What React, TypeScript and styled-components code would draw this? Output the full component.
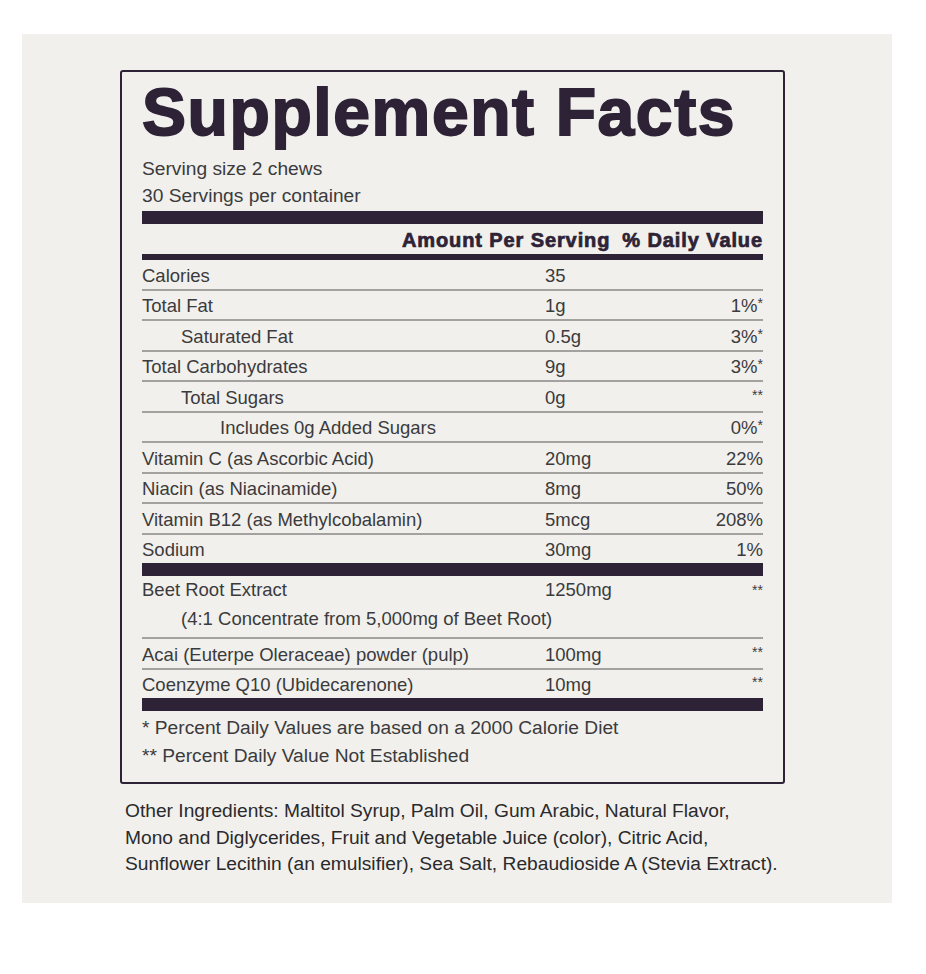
import React from "react";
import styled, { createGlobalStyle } from "styled-components";

const GlobalStyle = createGlobalStyle`
  html, body { margin: 0; padding: 0; background: #ffffff; }
  body { font-family: "Liberation Sans", Arial, sans-serif; }
`;

const DARK = "#2e2236";
const TEXT = "#3b3b3d";
const RULE = "#a3a2a0";

const Panel = styled.div`
  margin: 34px 0 0 22px;
  width: 870px;
  height: 869px;
  box-sizing: border-box;
  background: #f1f0ec;
  padding: 36px 0 0 98px;
`;

const Label = styled.section`
  width: 665px;
  box-sizing: border-box;
  border: 2px solid ${DARK};
  border-radius: 3px;
  padding: 7px 20px 12px 20px;
  color: ${TEXT};
`;

const Title = styled.h1`
  margin: 0;
  font-family: "Liberation Sans", Arial, sans-serif;
  font-weight: 700;
  font-size: 66px;
  line-height: 66px;
  letter-spacing: 1.6px;
  color: ${DARK};
  -webkit-text-stroke: 1.8px ${DARK};
`;

const Serving = styled.div`
  margin-top: 10px;
  font-size: 19.2px;
  line-height: 27px;
  padding-bottom: 2px;
`;

const Bar = styled.div<{ $h: number }>`
  height: ${(p) => p.$h}px;
  background: ${DARK};
`;

const HeaderRow = styled.div`
  display: flex;
  justify-content: flex-end;
  gap: 12px;
  height: 30px;
  padding-top: 3px;
  box-sizing: border-box;
  align-items: center;
  font-weight: 700;
  font-size: 20px;
  letter-spacing: 0.9px;
  color: ${DARK};
  -webkit-text-stroke: 0.7px ${DARK};
`;

const Row = styled.div<{ $last?: boolean }>`
  display: grid;
  grid-template-columns: 403px 1fr auto;
  align-items: center;
  box-sizing: border-box;
  height: ${(p) => (p.$last ? "28.5px" : "30.5px")};
  padding-top: 3px;
  font-size: 18.5px;
  border-bottom: ${(p) => (p.$last ? "none" : `2px solid ${RULE}`)};
`;

const Name = styled.span<{ $indent?: number }>`
  padding-left: ${(p) => (p.$indent || 0) * 39}px;
  white-space: nowrap;
`;

const Amount = styled.span``;

const DV = styled.span`
  text-align: right;
`;

const Star = styled.span`
  font-size: 14px;
  vertical-align: 4px;
`;

const BlockRow = styled.div`
  display: grid;
  grid-template-columns: 403px 1fr auto;
  font-size: 18.5px;
  line-height: 26px;
  padding-top: 1px;
  padding-bottom: 5px;
  border-bottom: 2px solid ${RULE};
`;

const SubLine = styled.span`
  grid-column: 1 / 4;
  padding-left: 39px;
`;

const Footnotes = styled.div`
  padding-top: 3px;
  font-size: 19.2px;
  line-height: 28px;
`;

const Ingredients = styled.p`
  margin: 14px 0 0 5px;
  font-size: 19.2px;
  line-height: 26.5px;
  color: #2a2a2c;
`;

type Fact = { name: string; amt: string; dv: string; star?: string; indent?: number };

const facts: Fact[] = [
  { name: "Calories", amt: "35", dv: "" },
  { name: "Total Fat", amt: "1g", dv: "1%", star: "*" },
  { name: "Saturated Fat", amt: "0.5g", dv: "3%", star: "*", indent: 1 },
  { name: "Total Carbohydrates", amt: "9g", dv: "3%", star: "*" },
  { name: "Total Sugars", amt: "0g", dv: "", star: "**", indent: 1 },
  { name: "Includes 0g Added Sugars", amt: "", dv: "0%", star: "*", indent: 2 },
  { name: "Vitamin C (as Ascorbic Acid)", amt: "20mg", dv: "22%" },
  { name: "Niacin (as Niacinamide)", amt: "8mg", dv: "50%" },
  { name: "Vitamin B12 (as Methylcobalamin)", amt: "5mcg", dv: "208%" },
  { name: "Sodium", amt: "30mg", dv: "1%" },
];

const others: Fact[] = [
  { name: "Acai (Euterpe Oleraceae) powder (pulp)", amt: "100mg", dv: "", star: "**" },
  { name: "Coenzyme Q10 (Ubidecarenone)", amt: "10mg", dv: "", star: "**" },
];

const FactRow = ({ f, last }: { f: Fact; last?: boolean }) => (
  <Row $last={last}>
    <Name $indent={f.indent}>{f.name}</Name>
    <Amount>{f.amt}</Amount>
    <DV>
      {f.dv}
      {f.star && <Star>{f.star}</Star>}
    </DV>
  </Row>
);

export default function App() {
  return (
    <>
      <GlobalStyle />
      <Panel>
        <Label>
          <Title>Supplement Facts</Title>
          <Serving>
            Serving size 2 chews
            <br />
            30 Servings per container
          </Serving>
          <Bar $h={13} />
          <HeaderRow>
            <span>Amount Per Serving</span>
            <span>% Daily Value</span>
          </HeaderRow>
          <Bar $h={6} />
          {facts.map((f, i) => (
            <FactRow key={f.name} f={f} last={i === facts.length - 1} />
          ))}
          <Bar $h={13} />
          <BlockRow>
            <Name>Beet Root Extract</Name>
            <Amount>1250mg</Amount>
            <DV>
              <Star>**</Star>
            </DV>
            <SubLine>(4:1 Concentrate from 5,000mg of Beet Root)</SubLine>
          </BlockRow>
          {others.map((f, i) => (
            <FactRow key={f.name} f={f} last={i === others.length - 1} />
          ))}
          <Bar $h={13} />
          <Footnotes>
            * Percent Daily Values are based on a 2000 Calorie Diet
            <br />
            ** Percent Daily Value Not Established
          </Footnotes>
        </Label>
        <Ingredients>
          Other Ingredients: Maltitol Syrup, Palm Oil, Gum Arabic, Natural Flavor,
          <br />
          Mono and Diglycerides, Fruit and Vegetable Juice (color), Citric Acid,
          <br />
          Sunflower Lecithin (an emulsifier), Sea Salt, Rebaudioside A (Stevia Extract).
        </Ingredients>
      </Panel>
    </>
  );
}
